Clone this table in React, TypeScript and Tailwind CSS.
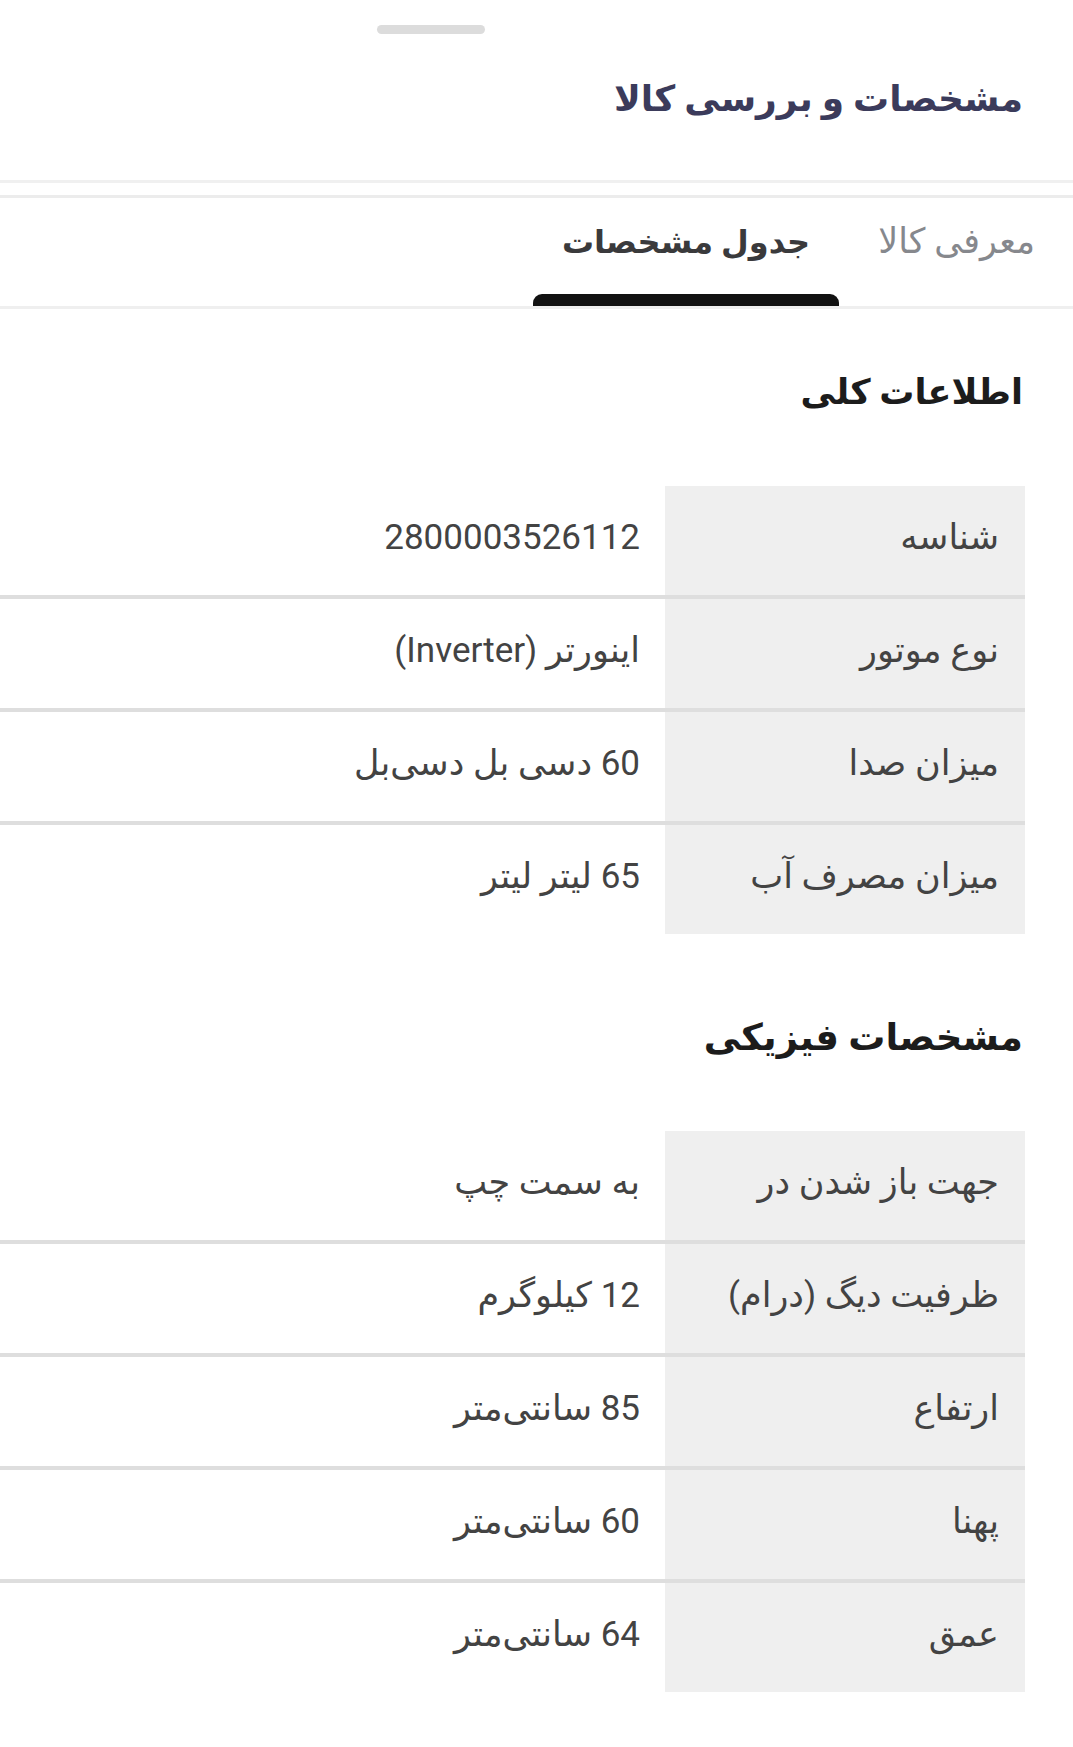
type Spec = { label: string; value: string };

const general: Spec[] = [
  { label: 'شناسه', value: '2800003526112' },
  { label: 'نوع موتور', value: 'اینورتر (Inverter)' },
  { label: 'میزان صدا', value: '60 دسی بل دسی‌بل' },
  { label: 'میزان مصرف آب', value: '65 لیتر لیتر' },
];

const physical: Spec[] = [
  { label: 'جهت باز شدن در', value: 'به سمت چپ' },
  { label: 'ظرفیت دیگ (درام)', value: '12 کیلوگرم' },
  { label: 'ارتفاع', value: '85 سانتی‌متر' },
  { label: 'پهنا', value: '60 سانتی‌متر' },
  { label: 'عمق', value: '64 سانتی‌متر' },
];

const SpecTable = ({ rows }: { rows: Spec[] }) => (
  <div className="mr-[48px]">
    {rows.map((row, idx) => (
      <div
        key={row.label}
        className={`flex ${idx < rows.length - 1 ? 'border-b-4 border-[#dedede]' : ''}`}
      >
        <div className="w-[360px] h-[109px] shrink-0 bg-[#efefef] flex items-center pr-[26px] pb-[4px] text-[35px] text-[#434343]">
          {row.label}
        </div>
        <div className="flex-1 h-[109px] flex items-center pr-[25px] pb-[4px] text-[35px] text-[#434343]">
          {row.value}
        </div>
      </div>
    ))}
  </div>
);

const App = () => {
  return (
    <div
      dir="rtl"
      className="w-[1073px] min-h-[1747px] bg-white"
      style={{ fontFamily: "Roboto, 'DejaVu Sans', sans-serif" }}
    >
      <div className="pt-[25px] flex justify-end pl-[377px]">
        <div className="w-[108px] h-[9px] rounded-full bg-[#dcdcdc]"></div>
      </div>

      <div className="h-[146px] flex items-center pr-[50px] pb-[16px]">
        <h1 className="text-[36px] font-bold text-[#3b3b5b]">مشخصات و بررسی کالا</h1>
      </div>
      <div className="h-[3px] bg-[#f0f0f0]"></div>
      <div className="h-[12px]"></div>
      <div className="h-[3px] bg-[#ececec]"></div>

      <div className="flex h-[108px] pr-[9px] gap-[10px] border-b-[3px] border-[#efefef] box-content">
        <div className="flex flex-col px-[29px]">
          <div className="mt-[24px] h-[40px] leading-[40px] text-[35px] text-[#86888d]">معرفی کالا</div>
        </div>
        <div className="flex flex-col">
          <div className="mt-[24px] h-[40px] leading-[40px] text-[32px] font-semibold text-[#3a3a3c] px-[29px]">
            جدول مشخصات
          </div>
          <div className="mt-auto h-[12px] rounded-t-[9px] bg-[#111111]"></div>
        </div>
      </div>

      <h2 className="mt-[54px] h-[60px] leading-[60px] pr-[50px] text-[35px] font-bold text-[#1c1c1c]">
        اطلاعات کلی
      </h2>
      <div className="mt-[63px]">
        <SpecTable rows={general} />
      </div>

      <h2 className="mt-[74px] h-[60px] leading-[60px] pr-[50px] text-[37px] font-bold text-[#1c1c1c]">
        مشخصات فیزیکی
      </h2>
      <div className="mt-[63px]">
        <SpecTable rows={physical} />
      </div>
    </div>
  );
};

export default App;
